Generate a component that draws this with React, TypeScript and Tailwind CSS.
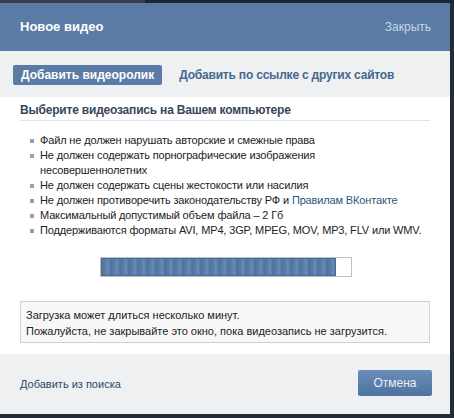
import React from 'react';

const rules = [
  'Файл не должен нарушать авторские и смежные права',
  'Не должен содержать порнографические изображения несовершеннолетних',
  'Не должен содержать сцены жестокости или насилия',
];

const font = { fontFamily: 'Tahoma, "Liberation Sans", Arial, sans-serif' };

const Bullet: React.FC<{ children: React.ReactNode }> = ({ children }) => (
  <li className="flex">
    <span className="mt-[6px] mr-[6px] w-[4px] h-[4px] shrink-0 bg-[#a0a0a0]" />
    <span>{children}</span>
  </li>
);

export default function App() {
  return (
    <div className="w-[454px] h-[418px] bg-[#262c35] flex flex-col" style={font}>
      <div className="flex h-[3px] shrink-0">
        <div className="w-[145px] bg-[#3b3e44]" />
        <div className="flex-1 bg-[#1c2633]" />
      </div>
      <div className="w-[450px] h-[411px] flex flex-col bg-white">
        {/* header */}
        <div className="h-[48px] shrink-0 bg-[#5a7ba5] flex items-center justify-between pl-[20px] pr-[19px]">
          <span className="text-white text-[13px] font-bold">Новое видео</span>
          <span className="text-[#c9d6e6] text-[12px]">Закрыть</span>
        </div>

        {/* tabs */}
        <div className="h-[46px] shrink-0 bg-[#eef0f2] flex items-center pl-[13px] pt-[2px]">
          <div className="h-[20px] px-[8px] bg-[#5a7ba5] rounded-[2px] text-white text-[12px] font-bold flex items-center">
            Добавить видеоролик
          </div>
          <div className="ml-[17px] text-[#45688e] text-[12px] font-bold tracking-[-0.2px]">Добавить по ссылке с других сайтов</div>
        </div>

        {/* content */}
        <div className="flex-1 px-[20px] pt-[4px]">
          <div className="text-[12px] font-bold text-[#36465d] h-[20px] flex items-center border-b border-[#dde3ea] pb-[2px] tracking-[-0.2px]">
            Выберите видеозапись на Вашем компьютере
          </div>
          <ul className="mt-[12px] pl-[10px] pr-[10px] text-[11px] leading-[15px] text-[#222] tracking-[-0.15px]">
            {rules.map(r => <Bullet key={r}>{r}</Bullet>)}
            <Bullet>
              Не должен противоречить законодательству РФ и <span className="text-[#2b587a]">Правилам ВКонтакте</span>
            </Bullet>
            <Bullet>Максимальный допустимый объем файла – 2 Гб</Bullet>
            <Bullet><span className="whitespace-nowrap">Поддерживаются форматы AVI, MP4, 3GP, MPEG, MOV, MP3, FLV или WMV.</span></Bullet>
          </ul>

          <div className="mt-[19px] ml-[80px] w-[252px] h-[20px] border border-[#c0c0c0] bg-white flex">
            <div className="w-[235px] h-full bg-[repeating-linear-gradient(90deg,#4f72a0_0px,#5b7eab_4px,#6a8bb6_6px,#4f72a0_9px)] border border-[#4a6a94]" />
          </div>

          <div className="mt-[24px] h-[42px] border border-[#cfcfcf] bg-[#f7f7f7] px-[5px] pt-[5px] text-[11px] leading-[16px] text-[#222]">
            <div>Загрузка может длиться несколько минут.</div>
            <div>Пожалуйста, не закрывайте это окно, пока видеозапись не загрузится.</div>
          </div>
        </div>

        {/* footer */}
        <div className="h-[60px] shrink-0 bg-[#eef0f2] flex items-center justify-between pl-[20px] pr-[18px]">
          <span className="text-[11px] text-[#2b4a6b]">Добавить из поиска</span>
          <div className="w-[74px] h-[26px] rounded-[2px] bg-gradient-to-b from-[#6a8db8] to-[#4f73a0] text-[#e8eef5] text-[12px] flex items-center justify-center mt-[-2px]">
            Отмена
          </div>
        </div>
      </div>
    </div>
  );
}
